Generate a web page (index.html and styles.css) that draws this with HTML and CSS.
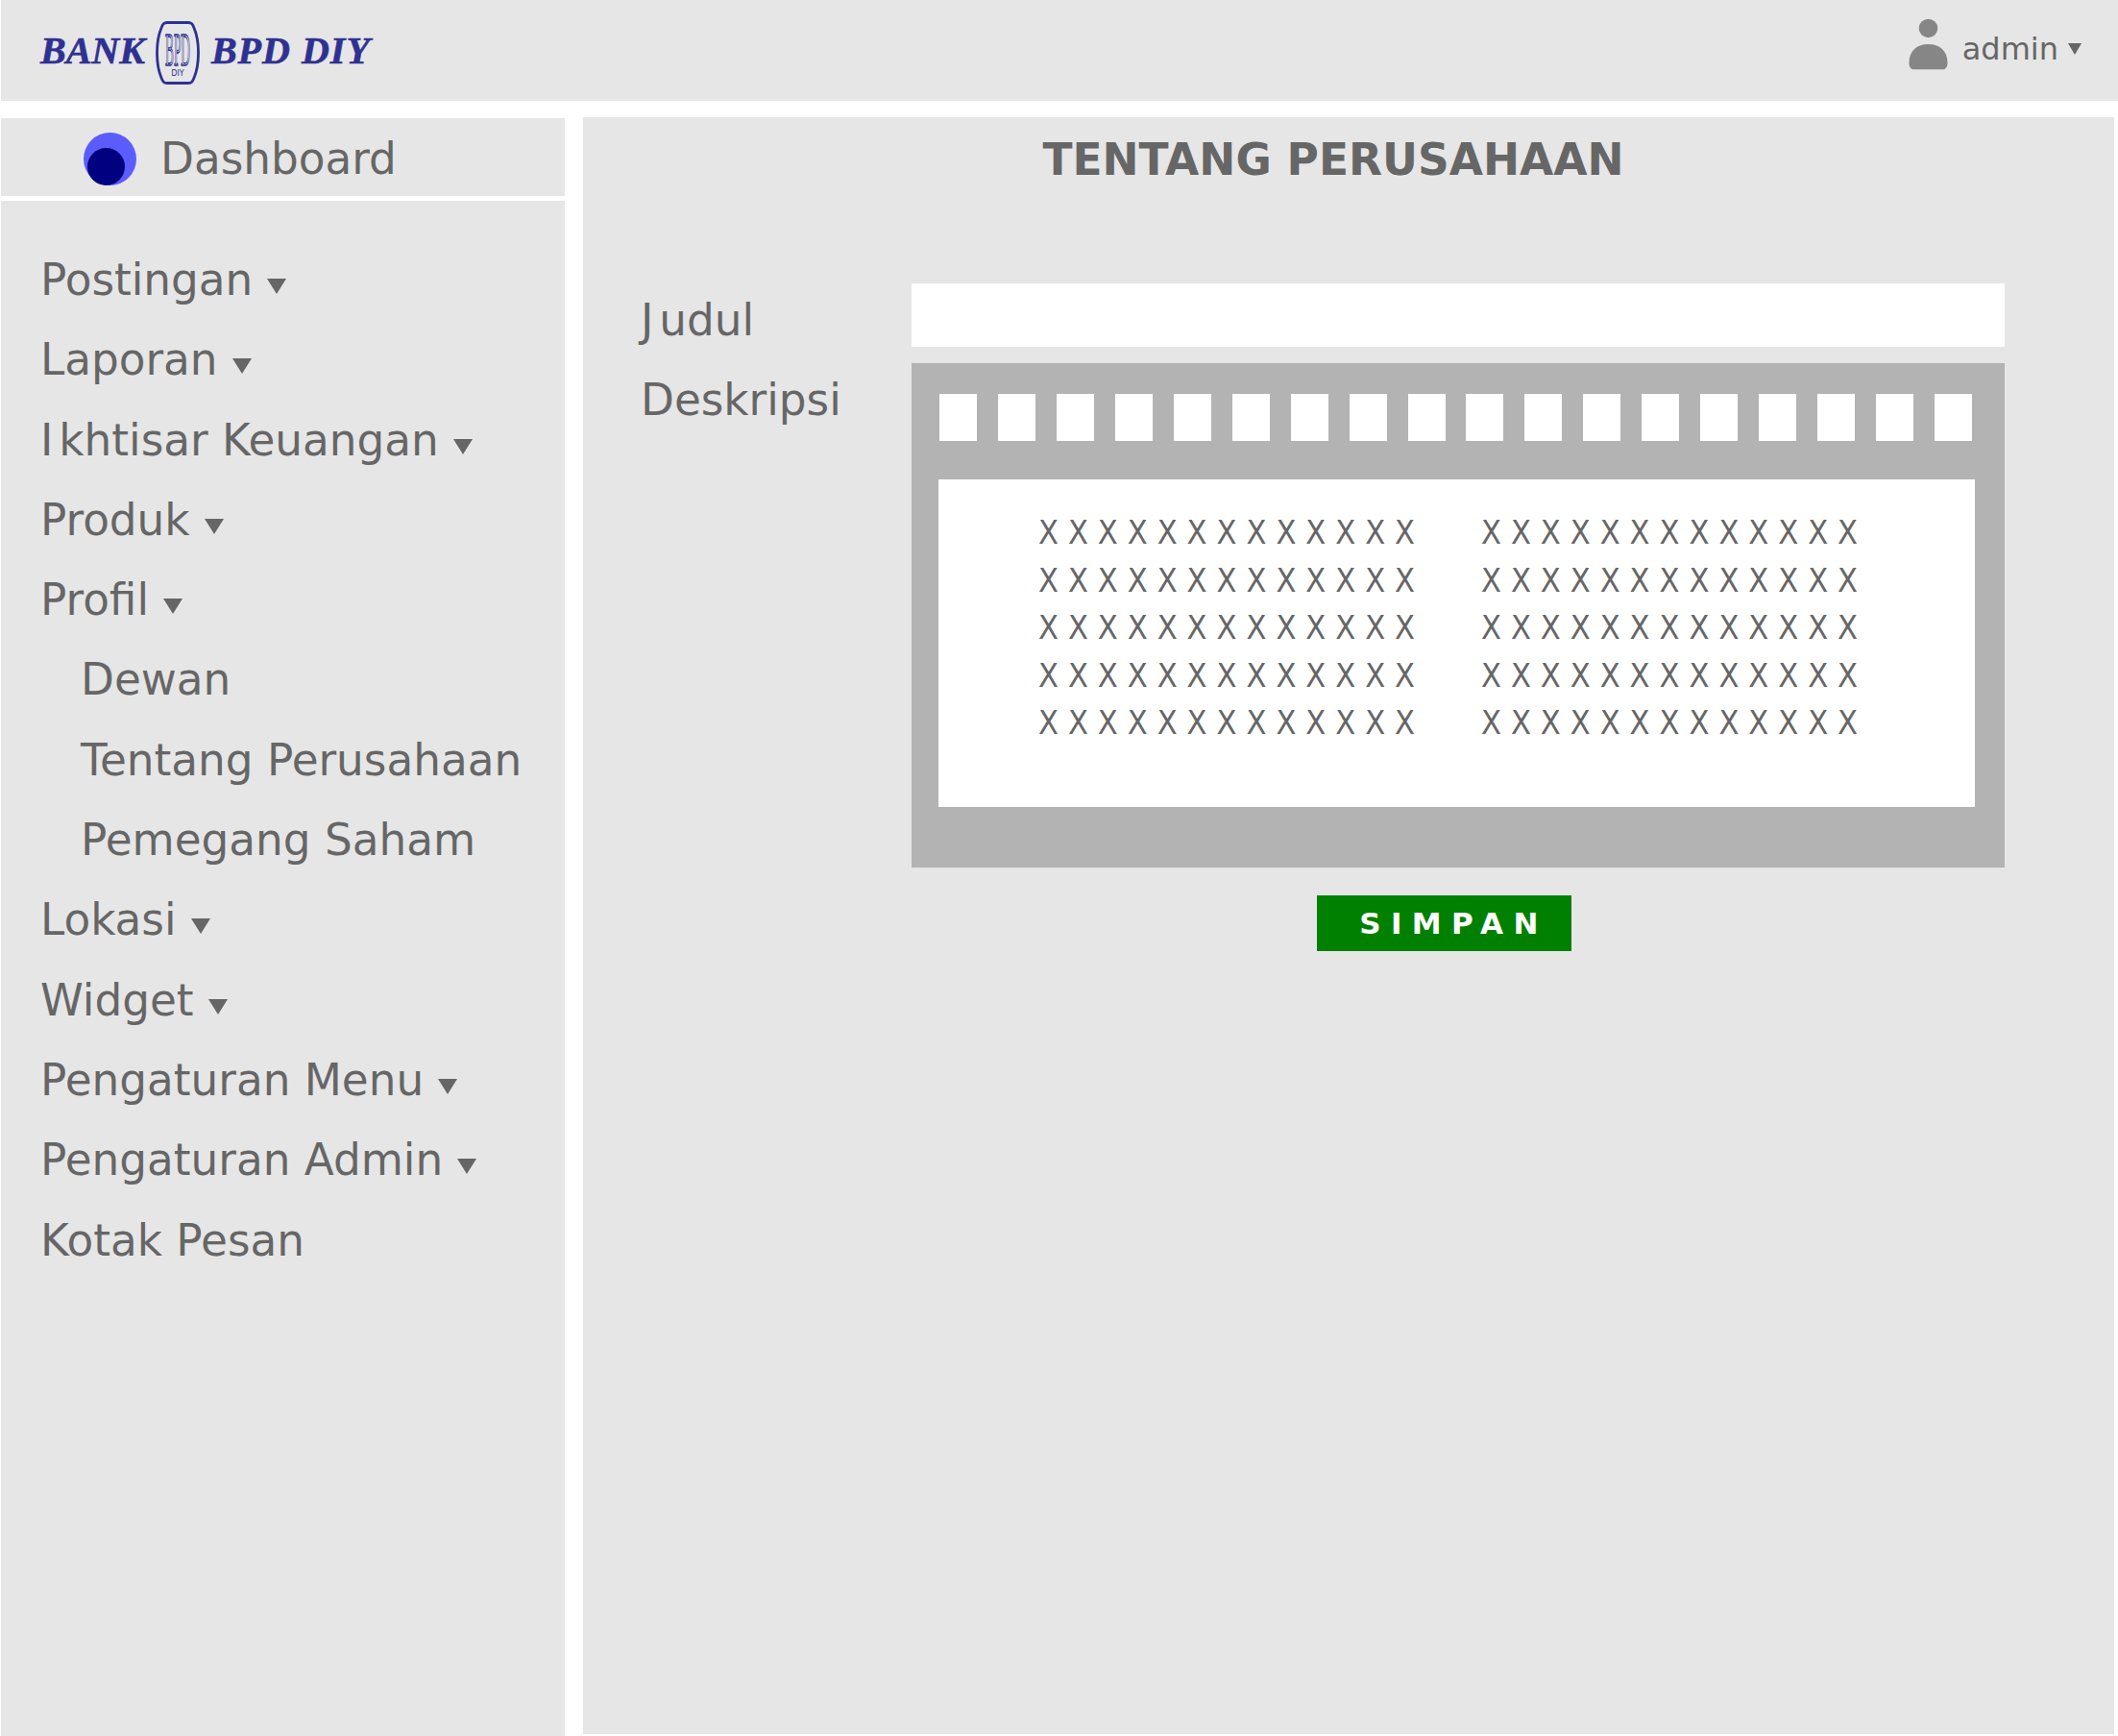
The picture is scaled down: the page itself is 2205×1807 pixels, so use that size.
FILE: index.html
```html
<!DOCTYPE html>
<html lang="id">
<head>
<meta charset="utf-8">
<title>Tentang Perusahaan</title>
<link rel="stylesheet" href="styles.css">
</head>
<body>
<header class="topbar">
  <div class="logo">
    <span class="logo-text">BANK</span>
    <svg class="emblem" viewBox="0 0 46 66" aria-hidden="true">
      <path d="M12 1.500 H34 C37.500 1.500 38.500 3 40 7 C43 14 44.500 24 44.500 33 C44.500 42 43 52 40 59 C38.500 63 37.500 64.500 34 64.500 H12 C8.500 64.500 7.500 63 6 59 C3 52 1.500 42 1.500 33 C1.500 24 3 14 6 7 C7.500 3 8.500 1.500 12 1.500 Z" fill="none" stroke="#2e3192" stroke-width="2.8"/>
      <text class="emblem-bpd" x="23" y="46" text-anchor="middle" textLength="26" lengthAdjust="spacingAndGlyphs">BPD</text>
      <text class="emblem-diy" x="23" y="57" text-anchor="middle">DIY</text>
    </svg>
    <span class="logo-text logo-text-wide">BPD DIY</span>
  </div>
  <div class="user">
    <svg class="user-icon" viewBox="0 0 42 54" aria-hidden="true">
      <circle cx="21" cy="10" r="10" fill="#868686"/>
      <path d="M0.500 47 C0.500 34 9 27 21 27 C33 27 41.500 34 41.500 47 C41.500 51.500 39.500 54 36 54 H6 C2.500 54 0.500 51.500 0.500 47 Z" fill="#868686"/>
    </svg>
    <span class="user-name">admin</span>
    <span class="caret caret-small"></span>
  </div>
</header>

<div class="layout">
  <aside class="sidebar">
    <a class="dash-link">
      <span class="dash-icon"><span class="dash-icon-inner"></span></span>
      <span>Dashboard</span>
    </a>
    <nav class="menu">
      <a class="menu-item">Postingan<span class="caret"></span></a>
      <a class="menu-item">Laporan<span class="caret"></span></a>
      <a class="menu-item"><span class="wide-initial">I</span>khtisar Keuangan<span class="caret"></span></a>
      <a class="menu-item">Produk<span class="caret"></span></a>
      <a class="menu-item">Profil<span class="caret"></span></a>
      <a class="menu-item menu-sub">Dewan</a>
      <a class="menu-item menu-sub">Tentang Perusahaan</a>
      <a class="menu-item menu-sub">Pemegang Saham</a>
      <a class="menu-item">Lokasi<span class="caret"></span></a>
      <a class="menu-item">Widget<span class="caret"></span></a>
      <a class="menu-item">Pengaturan Menu<span class="caret"></span></a>
      <a class="menu-item">Pengaturan Admin<span class="caret"></span></a>
      <a class="menu-item">Kotak Pesan</a>
    </nav>
  </aside>

  <main class="content">
    <h1 class="title">TENTANG PERUSAHAAN</h1>
    <div class="form">
      <label class="field-label"><span class="wide-initial">J</span>udul</label>
      <div class="text-input"></div>
      <label class="field-label">Deskripsi</label>
      <div class="editor">
        <div class="toolbar">
          <span class="tool"></span><span class="tool"></span><span class="tool"></span><span class="tool"></span><span class="tool"></span><span class="tool"></span>
          <span class="tool"></span><span class="tool"></span><span class="tool"></span><span class="tool"></span><span class="tool"></span><span class="tool"></span>
          <span class="tool"></span><span class="tool"></span><span class="tool"></span><span class="tool"></span><span class="tool"></span><span class="tool"></span>
        </div>
        <div class="editor-body">
          <div class="col">
            <p>X X X X X X X X X X X X X</p>
            <p>X X X X X X X X X X X X X</p>
            <p>X X X X X X X X X X X X X</p>
            <p>X X X X X X X X X X X X X</p>
            <p>X X X X X X X X X X X X X</p>
          </div>
          <div class="col">
            <p>X X X X X X X X X X X X X</p>
            <p>X X X X X X X X X X X X X</p>
            <p>X X X X X X X X X X X X X</p>
            <p>X X X X X X X X X X X X X</p>
            <p>X X X X X X X X X X X X X</p>
          </div>
        </div>
      </div>
    </div>
    <div class="actions"><button class="save" type="button">SIMPAN</button></div>
  </main>
</div>
</body>
</html>
```

FILE: styles.css
```css
* { box-sizing: border-box; }
html, body { margin: 0; padding: 0; background: #fff; }
body {
  width: 2205px;
  height: 1807px;
  overflow: hidden;
  padding-left: 1px;
  font-family: "DejaVu Sans", sans-serif;
  color: #666;
}
.topbar {
  height: 105px;
  background: #e6e6e6;
  display: flex;
  justify-content: space-between;
  align-items: center;
  padding: 0 38px 0 41px;
}
.logo { display: flex; align-items: center; gap: 12px; }
.logo-text {
  font-family: "Liberation Serif", serif;
  font-weight: bold;
  font-style: italic;
  font-size: 40px;
  color: #2e3192;
  -webkit-text-stroke: 0.6px #2e3192;
}
.logo-text-wide { letter-spacing: 1px; }
.emblem { width: 46px; height: 66px; display: block; margin: 4px 0 0 -1px; overflow: visible; }
.emblem-bpd {
  font-family: "Liberation Serif", serif;
  font-size: 48px;
  fill: none;
  stroke: #2e3192;
  stroke-width: 1.6;
}
.emblem-diy {
  font-family: "DejaVu Sans", sans-serif;
  font-size: 8px;
  fill: #2e3192;
}
.user { display: flex; align-items: center; }
.user-icon { width: 41px; height: 54px; display: block; margin: 0 15px 14px 0; }
.user-name { font-size: 32px; margin-bottom: 4px; }
.caret {
  display: inline-block;
  width: 0;
  height: 0;
  border-left: 10px solid transparent;
  border-right: 10px solid transparent;
  border-top: 16px solid #666;
  margin-left: 15px;
  vertical-align: 1px;
}
.caret-small {
  border-left-width: 7.5px;
  border-right-width: 7.5px;
  border-top-width: 12px;
  margin: 0 0 4px 10px;
}
.wide-initial { letter-spacing: 6px; }
.layout {
  display: grid;
  grid-template-columns: 587px 1594px;
  column-gap: 19px;
  margin-top: 17px;
  height: 1685px;
}
.sidebar { display: flex; flex-direction: column; gap: 5px; margin-top: 1px; height: 1684px; }
.dash-link {
  height: 81px;
  background: #e6e6e6;
  display: flex;
  align-items: center;
  padding: 4px 0 0 86px;
  gap: 25px;
  font-size: 45.3px;
  flex: none;
}
.dash-icon {
  width: 55px;
  height: 55px;
  border-radius: 50%;
  background: #5a5dfb;
  display: flex;
  align-items: flex-end;
  padding-left: 4px;
  flex: none;
}
.dash-icon-inner {
  width: 39px;
  height: 39px;
  border-radius: 50%;
  background: #000080;
}
.menu {
  flex: 1;
  background: #e6e6e6;
  padding: 41px 0 0 41px;
  display: flex;
  flex-direction: column;
}
.menu-item {
  font-size: 45.3px;
  line-height: 83.3px;
  white-space: nowrap;
}
.menu-sub { padding-left: 42px; }
.content {
  background: #e6e6e6;
  height: 1683px;
}
.title {
  margin: 0;
  font-size: 45.5px;
  font-weight: bold;
  line-height: 89px;
  text-align: center;
  padding-right: 32px;
}
.form {
  display: grid;
  grid-template-columns: 282px 1138px;
  row-gap: 6px;
  margin-top: 84px;
  padding-left: 60px;
}
.field-label { font-size: 45.3px; line-height: 76px; padding-top: 1px; }
.text-input { height: 66px; background: #fff; }
.editor {
  height: 525px;
  background: #b3b3b3;
  padding: 32px 31px 0 28px;
}
.toolbar { display: flex; justify-content: space-between; padding: 0 3px 0 1px; }
.tool { width: 39px; height: 49px; background: #fff; flex: none; }
.editor-body {
  margin-top: 40px;
  height: 341px;
  background: #fff;
  display: flex;
  padding: 31px 0 0 104px;
  gap: 56px;
}
.col { width: 405px; }
.col p {
  margin: 0;
  font-size: 34px;
  font-stretch: condensed;
  line-height: 49.6px;
  white-space: nowrap;
  letter-spacing: 0.13px;
}
.actions { padding-left: 764px; margin-top: 29px; }
.save {
  width: 265px;
  height: 58px;
  border: 0;
  border-radius: 0;
  background: #008000;
  color: #fff;
  font-family: "DejaVu Sans", sans-serif;
  font-weight: bold;
  font-size: 31px;
  letter-spacing: 10.3px;
  padding: 0 0 0 20px;
}
```
